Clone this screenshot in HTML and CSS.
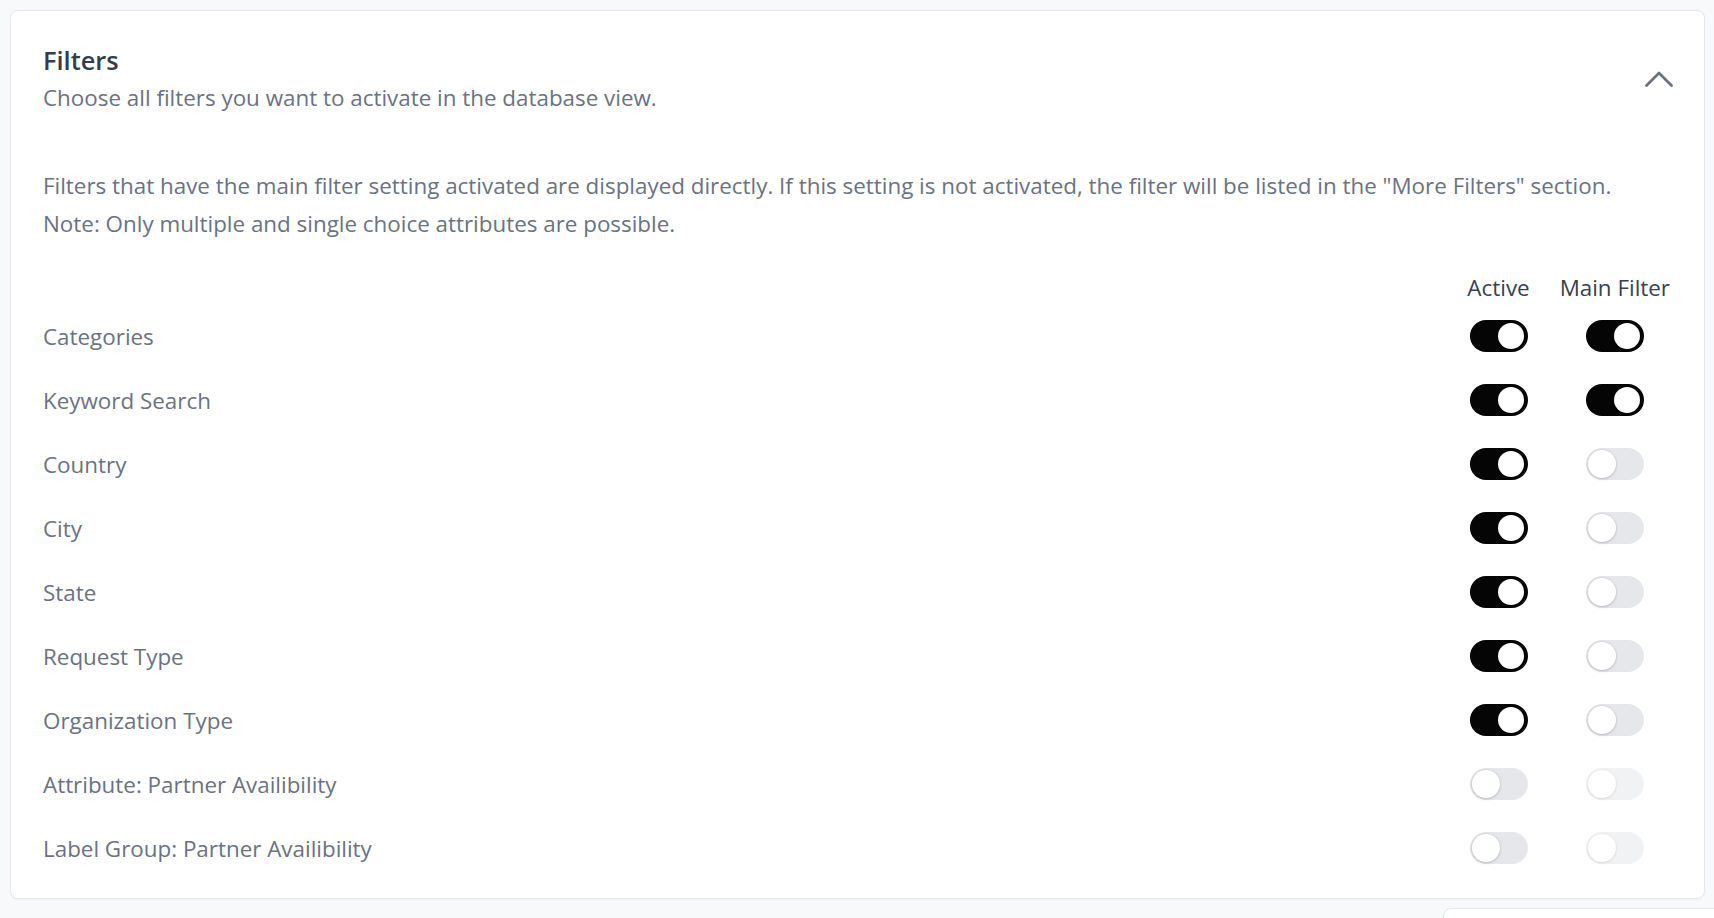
FILE: index.html
```html
<!DOCTYPE html>
<html>
  <head>
    <meta name="viewport" content="width=device-width, initial-scale=1" />
    <link rel="stylesheet" href="styles.css">
  </head>
  <body>
    <div class="card">
      <div class="card-header">
        <div>
          <h2 class="title">Filters</h2>
          <p class="subtitle">Choose all filters you want to activate in the database view.</p>
        </div>
        <button class="collapse-btn" type="button" aria-label="Collapse">
          <svg width="28" height="16" viewBox="0 0 28 16" fill="none">
            <polyline points="1.5,14.5 14,2 26.5,14.5" stroke="#6b7280" stroke-width="2.8" stroke-linecap="round" stroke-linejoin="round"/>
          </svg>
        </button>
      </div>

      <p class="info">
        Filters that have the main filter setting activated are displayed directly. If this setting is not activated, the filter will be listed in the "More Filters" section.<br>
        Note: Only multiple and single choice attributes are possible.
      </p>

      <div class="filter-grid">
        <div></div>
        <div class="col-head">Active</div>
        <div class="col-head">Main Filter</div>

        <div class="filter-name">Categories</div>
        <div class="cell"><span class="toggle on"></span></div>
        <div class="cell"><span class="toggle on"></span></div>

        <div class="filter-name">Keyword Search</div>
        <div class="cell"><span class="toggle on"></span></div>
        <div class="cell"><span class="toggle on"></span></div>

        <div class="filter-name">Country</div>
        <div class="cell"><span class="toggle on"></span></div>
        <div class="cell"><span class="toggle"></span></div>

        <div class="filter-name">City</div>
        <div class="cell"><span class="toggle on"></span></div>
        <div class="cell"><span class="toggle"></span></div>

        <div class="filter-name">State</div>
        <div class="cell"><span class="toggle on"></span></div>
        <div class="cell"><span class="toggle"></span></div>

        <div class="filter-name">Request Type</div>
        <div class="cell"><span class="toggle on"></span></div>
        <div class="cell"><span class="toggle"></span></div>

        <div class="filter-name">Organization Type</div>
        <div class="cell"><span class="toggle on"></span></div>
        <div class="cell"><span class="toggle"></span></div>

        <div class="filter-name">Attribute: Partner Availibility</div>
        <div class="cell"><span class="toggle"></span></div>
        <div class="cell"><span class="toggle disabled"></span></div>

        <div class="filter-name">Label Group: Partner Availibility</div>
        <div class="cell"><span class="toggle"></span></div>
        <div class="cell"><span class="toggle disabled"></span></div>
      </div>
    </div>

    <div class="next-card"></div>
  </body>
</html>
```

FILE: styles.css
```css
html, body {
  margin: 0;
  height: 100%;
  overflow: hidden;
}

body {
  font-family: "Open Sans", "Noto Sans", Arial, sans-serif;
  background-color: #f8f9fb;
  padding: 10px 9px 0 10px;
  box-sizing: border-box;
  color: #6b7280;
}

.card {
  background: #fff;
  border: 1px solid #e5e7eb;
  border-radius: 8px;
  box-shadow: 0 1px 2px rgba(0, 0, 0, 0.04);
  padding: 30px 34px 18px 32px;
  height: 889px;
  box-sizing: border-box;
}

.card-header {
  display: flex;
  justify-content: space-between;
  align-items: center;
}

.title {
  margin: 0;
  font-size: 25.4px;
  line-height: 38px;
  font-weight: 600;
  color: #333c4d;
}

.subtitle {
  margin: 0;
  font-size: 22.4px;
  line-height: 38px;
  color: #6b7280;
}

.collapse-btn {
  background: none;
  border: none;
  padding: 0;
  margin-right: -3px;
  width: 28px;
  height: 16px;
  cursor: pointer;
  display: flex;
}

.info {
  margin: 50px 0 0 0;
  font-size: 22.4px;
  line-height: 38px;
  color: #6b7280;
}

.filter-grid {
  margin-top: 28px;
  display: grid;
  grid-template-columns: 1fr auto auto;
  grid-auto-rows: 64px;
  grid-template-rows: 33px;
  column-gap: 30px;
  align-items: center;
}

.col-head {
  font-size: 22.4px;
  color: #374151;
  text-align: center;
  line-height: 32px;
}

.filter-name {
  font-size: 22.4px;
  color: #6b7280;
}

.cell {
  display: flex;
  justify-content: center;
}

.toggle {
  position: relative;
  display: inline-block;
  width: 58px;
  height: 32px;
  border-radius: 16px;
  background-color: #e5e7eb;
}

.toggle::after {
  content: "";
  position: absolute;
  top: 2px;
  left: 2px;
  width: 28px;
  height: 28px;
  border-radius: 50%;
  background: #fff;
  box-shadow: 0 1px 3px rgba(0, 0, 0, 0.18), 0 0 0 1px rgba(0, 0, 0, 0.03);
}

.toggle.on {
  background-color: #050505;
}

.toggle.on::after {
  top: 3px;
  left: 28px;
  width: 26px;
  height: 26px;
  box-shadow: none;
}

.toggle.disabled {
  opacity: 0.5;
}

.next-card {
  margin: 9px -20px 0 1433px;
  height: 40px;
  background: #fff;
  border: 1px solid #e5e7eb;
  border-radius: 8px;
}
```
